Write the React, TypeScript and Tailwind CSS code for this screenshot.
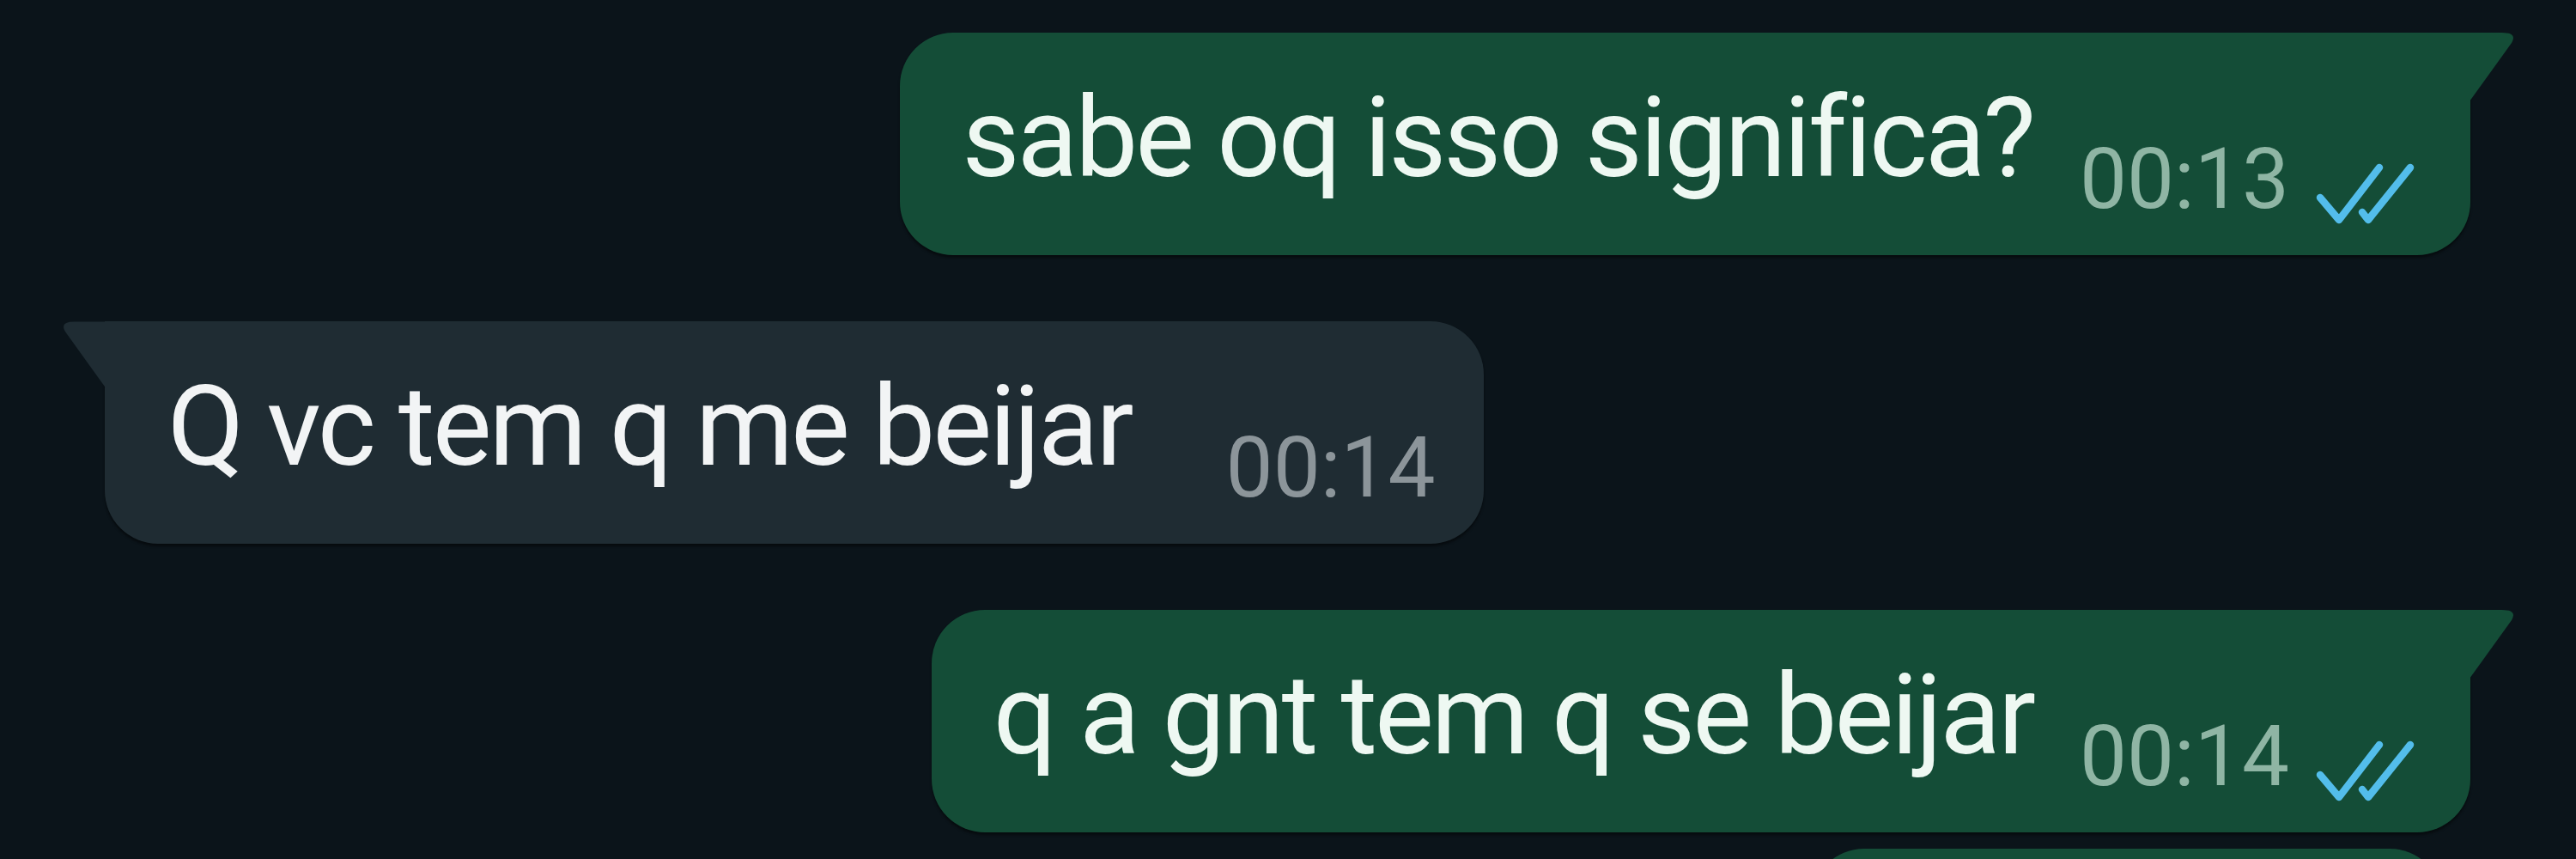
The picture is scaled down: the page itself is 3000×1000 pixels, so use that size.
import React from "react";

const font = { fontFamily: "Roboto, 'Noto Sans', sans-serif" };

function TailRight() {
  return (
    <svg className="absolute top-0 right-[-51px] h-[80px] w-[52px]" viewBox="0 0 52 80" aria-hidden="true">
      <path d="M0 0 H38 Q56 0 49 12 L0 80 Z" fill="#144d37" />
    </svg>
  );
}

function TailLeft() {
  return (
    <svg className="absolute top-0 left-[-49px] h-[78px] w-[50px]" viewBox="0 0 52 80" aria-hidden="true">
      <path d="M52 0 H14 Q-4 0 3 12 L52 80 Z" fill="#1f2c33" />
    </svg>
  );
}

function DoubleCheck() {
  return (
    <svg className="ml-[31px] mb-[4px] h-[73px] w-[115px] shrink-0" viewBox="0 0 115 73" fill="none" aria-hidden="true">
      <g stroke="#53bdeb" strokeWidth={8.5} strokeLinecap="round" strokeLinejoin="round">
        <path d="M5 41 L27 67 L74 6" />
        <path d="M54 58 L61 67 L110 6" />
      </g>
    </svg>
  );
}

function Outgoing({ text, time, tail }: { text: string; time: string; tail?: boolean }) {
  return (
    <div className="flex justify-end">
      <div
        className={`relative bg-[#144d37] pl-[72px] pr-[65px] pt-[48px] pb-[31px] shadow-[0_3px_3px_rgba(0,0,0,0.45)] ${
          tail ? "rounded-[62px] rounded-tr-none" : "rounded-[62px]"
        }`}
      >
        {tail && <TailRight />}
        <div className="flex items-end">
          <span className="pb-[30px] text-[130px] leading-[150px] tracking-[-3px] whitespace-nowrap text-[#eef8f2]">{text}</span>
          <span className="ml-[54px] text-[98px] leading-[115px] whitespace-nowrap text-[#8fb5a4]">{time}</span>
          <DoubleCheck />
        </div>
      </div>
    </div>
  );
}

function Incoming({ text, time }: { text: string; time: string }) {
  return (
    <div className="flex justify-start pl-[50px]">
      <div className="relative rounded-[62px] rounded-tl-none bg-[#1f2c33] pl-[73px] pr-[56px] pt-[48px] pb-[31px] shadow-[0_3px_3px_rgba(0,0,0,0.45)]">
        <TailLeft />
        <div className="flex items-end">
          <span className="pb-[30px] text-[130px] leading-[150px] tracking-[-3px] whitespace-nowrap text-[#f2f4f5]">{text}</span>
          <span className="ml-[110px] text-[98px] leading-[115px] whitespace-nowrap text-[#8c959a]">{time}</span>
        </div>
      </div>
    </div>
  );
}

export default function App() {
  return (
    <div className="min-h-screen overflow-hidden bg-[#0b141a]" style={font}>
      <div className="flex flex-col px-[72px] pt-[38px]">
        <div className="pr-[51px]">
          <Outgoing text="sabe oq isso significa?" time="00:13" tail />
        </div>
        <div className="mt-[77px]">
          <Incoming text="Q vc tem q me beijar" time="00:14" />
        </div>
        <div className="mt-[77px] pr-[51px]">
          <Outgoing text="q a gnt tem q se beijar" time="00:14" tail />
        </div>
        <div className="mt-[19px] flex justify-end pr-[83px]">
          <div className="h-[260px] w-[736px] rounded-[62px] bg-[#144d37]" />
        </div>
      </div>
    </div>
  );
}
